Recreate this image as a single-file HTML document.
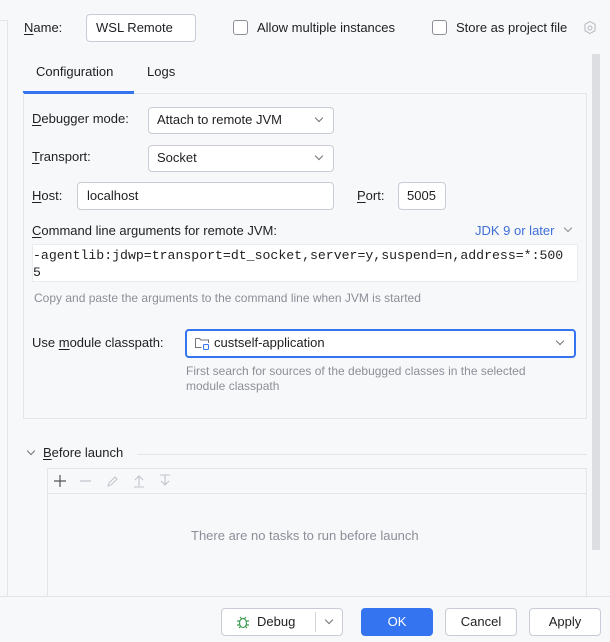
<!DOCTYPE html>
<html><head><style>
*{box-sizing:border-box;margin:0;padding:0}
body{width:610px;height:642px;background:#f7f8fa;font-family:"Liberation Sans",sans-serif;font-size:13px;color:#1e1f22;position:relative;overflow:hidden}
.a{position:absolute;white-space:nowrap}
.t{line-height:16px}
.in{position:absolute;background:#fff;border:1px solid #c9ccd6;border-radius:4px}
.cb{position:absolute;width:15px;height:15px;border:1px solid #8c8f97;border-radius:3px;background:#fff}
.chev{position:absolute;width:6px;height:6px;border-right:1px solid #6f737a;border-bottom:1px solid #6f737a;transform:rotate(45deg)}
.btn{position:absolute;border:1px solid #c9ccd6;border-radius:4px;background:#fff;text-align:center;line-height:26px;height:28px}
u{text-decoration:underline;text-underline-offset:2px}
.g{color:#8c8f97}
</style></head><body>
<div class="a" style="left:0;top:20px;width:8px;height:1px;background:#e4e5e8"></div>
<div class="a" style="left:7px;top:20px;width:1px;height:576px;background:#e4e5e8"></div>

<div class="a t" style="left:24px;top:20px"><u>N</u>ame:</div>
<div class="in" style="left:86px;top:14px;width:110px;height:28px"></div>
<div class="a t" style="left:96px;top:20px">WSL Remote</div>
<div class="cb" style="left:233px;top:20px"></div>
<div class="a t" style="left:257px;top:20px">Allow multiple instances</div>
<div class="cb" style="left:432px;top:20px"></div>
<div class="a t" style="left:456px;top:20px">Store as project file</div>
<svg class="a" style="left:583px;top:20px" width="14" height="16" viewBox="0 0 14 16"><path d="M7 1.5l5 2.8v6.4L7 13.5 2 10.7V4.3z" fill="none" stroke="#b5b8bf"/><circle cx="7" cy="8" r="2" fill="none" stroke="#b5b8bf"/></svg>

<div class="a t" style="left:36px;top:64px">Configuration</div>
<div class="a t" style="left:147px;top:64px">Logs</div>
<div class="a" style="left:23px;top:91px;width:111px;height:3px;background:#3574f0"></div>
<div class="a" style="left:23px;top:93px;width:564px;height:326px;border:1px solid #e4e5e8;border-top:none"></div>
<div class="a" style="left:134px;top:93px;width:453px;height:1px;background:#e4e5e8"></div>

<div class="a t" style="left:32px;top:111px"><u>D</u>ebugger mode:</div>
<div class="in" style="left:148px;top:107px;width:186px;height:27px"></div>
<div class="a t" style="left:157px;top:112px">Attach to remote JVM</div>
<div class="chev" style="left:316px;top:115px"></div>
<div class="a t" style="left:32px;top:149px"><u>T</u>ransport:</div>
<div class="in" style="left:148px;top:145px;width:186px;height:27px"></div>
<div class="a t" style="left:157px;top:150px">Socket</div>
<div class="chev" style="left:316px;top:153px"></div>
<div class="a t" style="left:32px;top:188px"><u>H</u>ost:</div>
<div class="in" style="left:77px;top:182px;width:257px;height:28px"></div>
<div class="a t" style="left:87px;top:188px">localhost</div>
<div class="a t" style="left:357px;top:188px"><u>P</u>ort:</div>
<div class="in" style="left:398px;top:182px;width:48px;height:28px"></div>
<div class="a t" style="left:407px;top:188px">5005</div>

<div class="a t" style="left:32px;top:223px"><u>C</u>ommand line arguments for remote JVM:</div>
<div class="a t" style="left:475px;top:223px;color:#3f6fd6">JDK 9 or later</div>
<div class="chev" style="left:565px;top:225px;border-color:#8c8f97"></div>
<div class="a" style="left:32px;top:244px;width:546px;height:38px;background:#fff;border:1px solid #ebecf0"></div>
<div class="a" style="left:33px;top:247px;font-family:'Liberation Mono',monospace;font-size:13.2px;line-height:17px">-agentlib:jdwp=transport=dt_socket,server=y,suspend=n,address=*:500<br>5</div>
<div class="a t g" style="left:34px;top:290px;font-size:12px">Copy and paste the arguments to the command line when JVM is started</div>

<div class="a t" style="left:32px;top:335px">Use <u>m</u>odule classpath:</div>
<div class="a" style="left:185px;top:329px;width:391px;height:29px;border:2px solid #3574f0;border-radius:4px;background:#fff"></div>
<svg class="a" style="left:194px;top:335px" width="16" height="16" viewBox="0 0 16 16"><path d="M1.5 3.5h4l1.5 1.5h7.5v3M1.5 3.5v9h6" fill="none" stroke="#6f737a"/><rect x="9.5" y="9.5" width="5" height="5" rx="1" fill="none" stroke="#3574f0"/></svg>
<div class="a t" style="left:214px;top:335px">custself-application</div>
<div class="chev" style="left:557px;top:338px"></div>
<div class="a g" style="left:186px;top:364px;font-size:12px;line-height:15px">First search for sources of the debugged classes in the selected<br>module classpath</div>

<div class="chev" style="left:28px;top:448px"></div>
<div class="a t" style="left:43px;top:445px"><u>B</u>efore launch</div>
<div class="a" style="left:137px;top:454px;width:450px;height:1px;background:#e4e5e8"></div>
<div class="a" style="left:47px;top:468px;width:540px;height:140px;border:1px solid #e4e5e8"></div>
<div class="a" style="left:47px;top:493px;width:540px;height:1px;background:#e4e5e8"></div>
<svg class="a" style="left:52px;top:473px" width="130" height="16" viewBox="0 0 130 16"><path d="M8 2v12M2 8h12" stroke="#555" stroke-width="1.2"/><path d="M28 8h11" stroke="#c0c3c9" stroke-width="1.2"/><path d="M56 13l1-3 6-6 2 2-6 6z" fill="none" stroke="#c0c3c9"/><path d="M87 13V3M83 7l4-4 4 4M82 14h10" fill="none" stroke="#c0c3c9" stroke-width="1.1"/><path d="M113 2v10M109 8l4 4 4-4M108 2h10" fill="none" stroke="#c0c3c9" stroke-width="1.1"/></svg>
<div class="a t g" style="left:191px;top:528px">There are no tasks to run before launch</div>

<div class="a" style="left:592px;top:54px;width:8px;height:496px;background:#dddee1"></div>
<div class="a" style="left:0;top:596px;width:610px;height:46px;background:#f7f8fa;border-top:1px solid #e4e5e8"></div>
<div class="btn" style="left:221px;top:608px;width:122px"></div>
<svg class="a" style="left:235px;top:614px" width="16" height="16" viewBox="0 0 16 16" fill="none" stroke="#3d9a50" stroke-width="1.2"><ellipse cx="8" cy="9" rx="3.5" ry="4.5"/><path d="M5 3l1.5 1.5M11 3L9.5 4.5M2 7h2.5M11.5 7H14M2 11h2.5M11.5 11H14M4 14l1.5-1.5M12 14l-1.5-1.5"/></svg>
<div class="a t" style="left:257px;top:614px">Debug</div>
<div class="a" style="left:315px;top:612px;width:1px;height:20px;background:#d3d5db"></div>
<div class="chev" style="left:326px;top:617px"></div>
<div class="btn" style="left:361px;top:608px;width:72px;background:#3574f0;border-color:#3574f0;color:#fff">OK</div>
<div class="btn" style="left:445px;top:608px;width:72px">Cancel</div>
<div class="btn" style="left:529px;top:608px;width:72px">Apply</div>
</body></html>
